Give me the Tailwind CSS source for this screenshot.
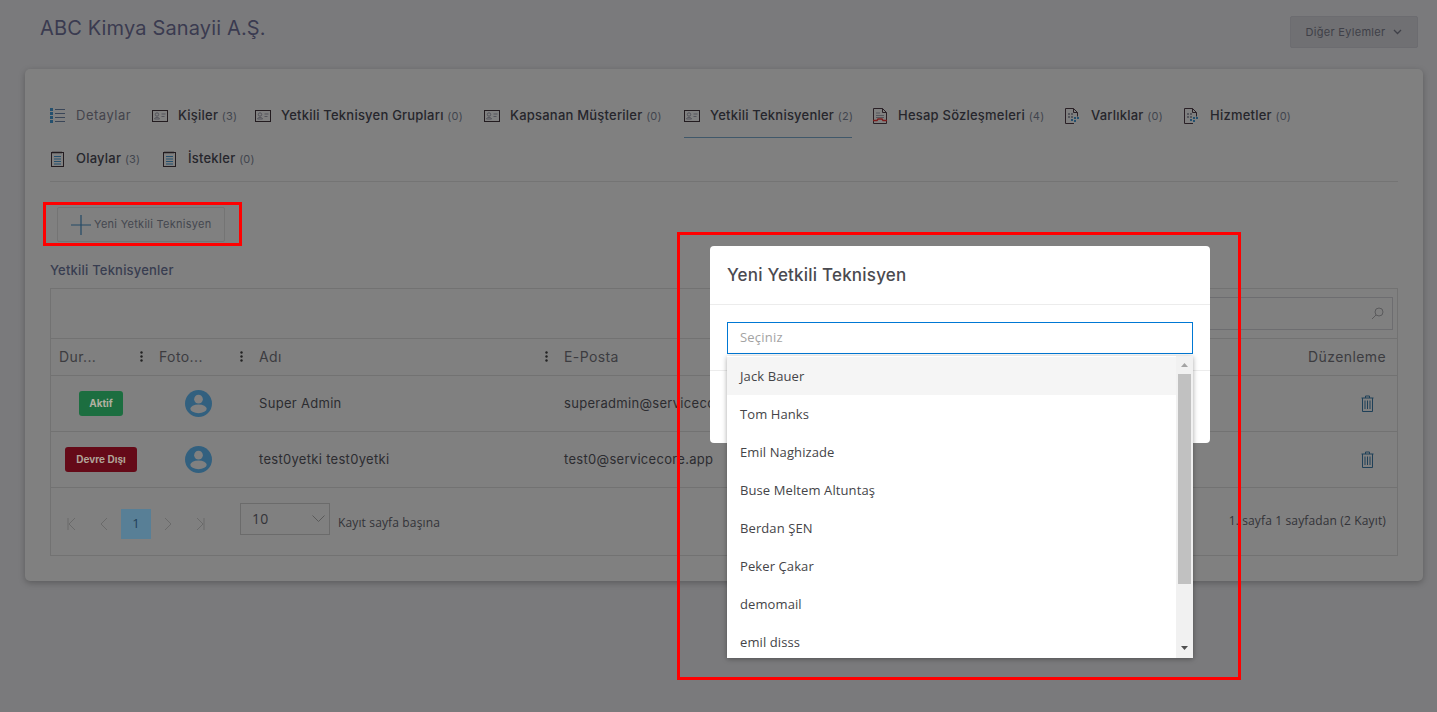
<!DOCTYPE html>
<html lang="tr">
<head>
<meta charset="utf-8">
<title>ABC Kimya Sanayii A.Ş.</title>
<script src="https://cdn.jsdelivr.net/npm/@tailwindcss/browser@4"></script>
</head>
<body class="m-0">
<div class="relative w-[1437px] h-[712px] overflow-hidden bg-[#7a7a7c] font-['Inter',sans-serif] text-[#26262c]">

  <!-- Page header -->
  <header class="flex justify-between items-start h-[69px] pl-[40px] pr-[19px]">
    <h1 class="mt-[14px] text-[20px] leading-[28px] font-normal tracking-[0.15px] text-[#3a3b50]">ABC Kimya Sanayii A.Ş.</h1>
    <button class="mt-[16px] flex items-center justify-center gap-[8px] w-[128px] h-[32px] rounded-[2px] bg-[#707073] border border-[#6c6c70] text-[11px] tracking-[0.3px] text-[#3f4048]">
      Diğer Eylemler
      <svg width="9" height="6" viewBox="0 0 9 6" fill="none" stroke="#3f4048" stroke-width="1.3"><path d="M1 1l3.5 3.5L8 1"/></svg>
    </button>
  </header>

  <!-- Card -->
  <main class="ml-[25px] w-[1398px] h-[512px] pt-[24px] pl-[25px] pr-[25px] rounded-[5px] bg-[#808080] shadow-[0_2px_6px_rgba(0,0,0,0.25)]">
    <!-- Tabs -->
    <nav class="flex flex-wrap pt-[1px] border-b border-[#747474] text-[13px] font-medium tracking-[0.22px]">
      <a class="flex items-center h-[43px] w-[102px] gap-[11px] text-[#44444c] font-normal tracking-[0.5px]">
        <svg class="shrink-0" width="15" height="15" viewBox="0 0 15 15" fill="none"><g fill="#24506e"><rect x="0" y="0" width="3" height="3"/><rect x="0" y="4" width="3" height="3"/><rect x="0" y="8" width="3" height="3"/><rect x="0" y="12" width="3" height="3"/></g><path d="M5 1.500h10M5 5.500h10M5 9.500h10M5 13.500h10" stroke="#3a4658"/></svg>
        Detaylar
      </a>
      <a class="flex items-center h-[43px] w-[103px] gap-[10px]">
        <svg class="shrink-0" width="16" height="12" viewBox="0 0 16 12" fill="none"><rect x=".5" y=".5" width="15" height="11" stroke="#231c20"/><circle cx="5" cy="4.500" r="1.700" stroke="#55555c"/><path d="M2.500 9c0-2 5-2 5 0zM9.500 4h4M9.500 6.500h3" stroke="#55555c"/></svg>
        <span class="whitespace-nowrap">Kişiler <span class="font-normal text-[11px] text-[#41454e]">(3)</span></span>
      </a>
      <a class="flex items-center h-[43px] w-[229px] gap-[10px]">
        <svg class="shrink-0" width="16" height="12" viewBox="0 0 16 12" fill="none"><rect x=".5" y=".5" width="15" height="11" stroke="#231c20"/><circle cx="5" cy="4.500" r="1.700" stroke="#55555c"/><path d="M2.500 9c0-2 5-2 5 0zM9.500 4h4M9.500 6.500h3" stroke="#55555c"/></svg>
        <span class="whitespace-nowrap">Yetkili Teknisyen Grupları <span class="font-normal text-[11px] text-[#41454e]">(0)</span></span>
      </a>
      <a class="flex items-center h-[43px] w-[200px] gap-[10px]">
        <svg class="shrink-0" width="16" height="12" viewBox="0 0 16 12" fill="none"><rect x=".5" y=".5" width="15" height="11" stroke="#231c20"/><circle cx="5" cy="4.500" r="1.700" stroke="#55555c"/><path d="M2.500 9c0-2 5-2 5 0zM9.500 4h4M9.500 6.500h3" stroke="#55555c"/></svg>
        <span class="whitespace-nowrap">Kapsanan Müşteriler <span class="font-normal text-[11px] text-[#41454e]">(0)</span></span>
      </a>
      <div class="w-[189px] h-[43px]">
        <a class="flex items-center h-[44px] w-[168px] gap-[10px] border-b border-[#40586a]">
          <svg class="shrink-0" width="16" height="12" viewBox="0 0 16 12" fill="none"><rect x=".5" y=".5" width="15" height="11" stroke="#231c20"/><circle cx="5" cy="4.500" r="1.700" stroke="#55555c"/><path d="M2.500 9c0-2 5-2 5 0zM9.500 4h4M9.500 6.500h3" stroke="#55555c"/></svg>
          <span class="whitespace-nowrap">Yetkili Teknisyenler <span class="font-normal text-[11px] text-[#41454e]">(2)</span></span>
        </a>
      </div>
      <a class="flex items-center h-[43px] w-[192px] gap-[11px]">
        <svg class="shrink-0" width="14" height="16" viewBox="0 0 14 16" fill="none"><path d="M.5.500h9l4 4v11H.5zM9.500.500v4h4" stroke="#2a2026"/><path d="M3 5h4M3 7.500h8M3 9.500h8" stroke="#55565c"/><path d="M0 12.500h4l1-1.500h4l1 1.500h4" stroke="#7c1c1c" stroke-width="1.400"/></svg>
        <span class="whitespace-nowrap">Hesap Sözleşmeleri <span class="font-normal text-[11px] text-[#41454e]">(4)</span></span>
      </a>
      <a class="flex items-center h-[43px] w-[119px] gap-[11px]">
        <svg class="shrink-0" width="15" height="16" viewBox="0 0 15 16" fill="none"><path d="M9 15.500H.5V.5h8l4 4v4M8.500.5v4h4" stroke="#2a2026"/><g fill="#55565c"><rect x="3" y="5" width="2" height="2"/><rect x="6" y="5" width="2" height="2"/><rect x="3" y="8" width="2" height="2"/><rect x="6" y="8" width="2" height="2"/></g><g fill="#24506e"><rect x="6" y="11" width="2" height="2"/><rect x="9" y="9" width="2" height="2"/><rect x="12" y="9" width="2" height="2"/><rect x="9" y="12" width="2" height="2"/></g></svg>
        <span class="whitespace-nowrap">Varlıklar <span class="font-normal text-[11px] text-[#41454e]">(0)</span></span>
      </a>
      <a class="flex items-center h-[43px] w-[120px] gap-[11px]">
        <svg class="shrink-0" width="15" height="16" viewBox="0 0 15 16" fill="none"><path d="M9 15.500H.5V.5h8l4 4v4M8.500.5v4h4" stroke="#2a2026"/><g fill="#55565c"><rect x="3" y="5" width="2" height="2"/><rect x="6" y="5" width="2" height="2"/><rect x="3" y="8" width="2" height="2"/><rect x="6" y="8" width="2" height="2"/></g><g fill="#24506e"><rect x="6" y="11" width="2" height="2"/><rect x="9" y="9" width="2" height="2"/><rect x="12" y="9" width="2" height="2"/><rect x="9" y="12" width="2" height="2"/></g></svg>
        <span class="whitespace-nowrap">Hizmetler <span class="font-normal text-[11px] text-[#41454e]">(0)</span></span>
      </a>
      <a class="flex items-center h-[44px] w-[112px] gap-[12px]">
        <svg class="shrink-0 ml-[1px]" width="13" height="16" viewBox="0 0 13 16" fill="none"><rect x=".5" y="1.500" width="12" height="14" stroke="#231c20"/><path d="M2 .5v2M4 .5v2M6 .5v2M8 .5v2M10 .5v2" stroke="#231c20"/><path d="M3 5.500h7M3 8h7M3 10.500h7M3 13h7" stroke="#24506e" stroke-width="1.200"/></svg>
        <span class="whitespace-nowrap">Olaylar <span class="font-normal text-[11px] text-[#41454e]">(3)</span></span>
      </a>
      <a class="flex items-center h-[44px] w-[150px] gap-[12px]">
        <svg class="shrink-0 ml-[1px]" width="13" height="16" viewBox="0 0 13 16" fill="none"><rect x=".5" y="1.500" width="12" height="14" stroke="#231c20"/><path d="M2 .5v2M4 .5v2M6 .5v2M8 .5v2M10 .5v2" stroke="#231c20"/><path d="M3 5.500h7M3 8h7M3 10.500h7M3 13h7" stroke="#24506e" stroke-width="1.200"/></svg>
        <span class="whitespace-nowrap">İstekler <span class="font-normal text-[11px] text-[#41454e]">(0)</span></span>
      </a>
    </nav>

    <!-- Add button -->
    <button class="mt-[25px] ml-[7px] flex items-center gap-[3px] w-[168px] h-[35px] pl-[13px] rounded-[2px] border border-[#747474] text-[11px] tracking-[0.27px] text-[#44474f]">
      <svg class="shrink-0" width="20" height="20" viewBox="0 0 20 20" fill="none" stroke="#244a66" stroke-width="1.200"><path d="M10 0v20M0 10h20"/></svg>
      Yeni Yetkili Teknisyen
    </button>

    <h2 class="mt-[18px] mb-[8px] h-[20px] text-[13px] leading-[20px] font-medium tracking-[0.2px] text-[#383d50]">Yetkili Teknisyenler</h2>

    <!-- Grid -->
    <section class="w-[1348px] h-[268px] border border-[#727272] text-[13px] tracking-[0.3px]">
      <div class="flex justify-end items-center h-[50px] pr-[4px] border-b border-[#727272]">
        <div class="flex items-center justify-end w-[400px] h-[33px] pr-[8px] border border-[#6d6d70]">
          <svg width="13" height="13" viewBox="0 0 13 13" fill="none" stroke="#5a5a5c"><circle cx="8" cy="5" r="4"/><path d="M5 8l-4 4"/></svg>
        </div>
      </div>
      <div class="grid grid-cols-[100px_100px_305px_1fr_120px] h-[37px] items-center border-b border-[#727272] text-[14px] tracking-[0.4px] text-[#3c3c40]">
        <div class="flex justify-between items-center pl-[8px] pr-[8px] pb-[2px]"><span>Dur...</span><svg width="3" height="11" viewBox="0 0 3 11" fill="#222"><circle cx="1.500" cy="1.500" r="1.200"/><circle cx="1.500" cy="5.500" r="1.200"/><circle cx="1.500" cy="9.500" r="1.200"/></svg></div>
        <div class="flex justify-between items-center pl-[8px] pr-[8px] pb-[2px]"><span>Foto...</span><svg width="3" height="11" viewBox="0 0 3 11" fill="#222"><circle cx="1.500" cy="1.500" r="1.200"/><circle cx="1.500" cy="5.500" r="1.200"/><circle cx="1.500" cy="9.500" r="1.200"/></svg></div>
        <div class="flex justify-between items-center pl-[8px] pr-[8px] pb-[2px]"><span>Adı</span><svg width="3" height="11" viewBox="0 0 3 11" fill="#222"><circle cx="1.500" cy="1.500" r="1.200"/><circle cx="1.500" cy="5.500" r="1.200"/><circle cx="1.500" cy="9.500" r="1.200"/></svg></div>
        <div class="pl-[8px] pb-[2px]">E-Posta</div>
        <div class="text-right pr-[11px] pb-[2px]">Düzenleme</div>
      </div>
      <div class="grid grid-cols-[100px_100px_305px_1fr_120px] h-[56px] items-center border-b border-[#727272] text-[#2c2c30]">
        <div class="flex justify-center"><span class="flex items-center justify-center w-[44px] h-[25px] rounded-[3px] bg-[#1c6e40] text-[10px] font-bold tracking-normal text-[#b0b0a0]">Aktif</span></div>
        <div class="flex justify-center pr-[5px]"><svg width="27" height="27" viewBox="0 0 28 28"><circle cx="14" cy="14" r="14" fill="#32607f"/><circle cx="14" cy="9.500" r="4.500" fill="#808080"/><ellipse cx="14" cy="19.500" rx="8.500" ry="4.500" fill="#808080"/></svg></div>
        <div class="pl-[8px]">Super Admin</div>
        <div class="pl-[8px] whitespace-nowrap">superadmin@servicecore.app</div>
        <div class="flex justify-end pr-[23px]"><svg width="13" height="17" viewBox="0 0 13 17" fill="none" stroke="#1f4058"><path d="M.5 3h12M4.500 3V1h4v2M1.500 3v13.500h10V3M4 5.500v8.500M6.500 5.500v8.500M9 5.500v8.500"/></svg></div>
      </div>
      <div class="grid grid-cols-[100px_100px_305px_1fr_120px] h-[56px] items-center border-b border-[#727272] text-[#2c2c30]">
        <div class="flex justify-center"><span class="flex items-center justify-center w-[72px] h-[25px] rounded-[3px] bg-[#650a18] text-[10px] font-bold tracking-normal text-[#b0a498]">Devre Dışı</span></div>
        <div class="flex justify-center pr-[5px]"><svg width="27" height="27" viewBox="0 0 28 28"><circle cx="14" cy="14" r="14" fill="#32607f"/><circle cx="14" cy="9.500" r="4.500" fill="#808080"/><ellipse cx="14" cy="19.500" rx="8.500" ry="4.500" fill="#808080"/></svg></div>
        <div class="pl-[8px]">test0yetki test0yetki</div>
        <div class="pl-[8px] whitespace-nowrap">test0@servicecore.app</div>
        <div class="flex justify-end pr-[23px]"><svg width="13" height="17" viewBox="0 0 13 17" fill="none" stroke="#1f4058"><path d="M.5 3h12M4.500 3V1h4v2M1.500 3v13.500h10V3M4 5.500v8.500M6.500 5.500v8.500M9 5.500v8.500"/></svg></div>
      </div>
      <!-- Pager -->
      <div class="flex items-start justify-between pl-[6px] pr-[11px] font-['Open_Sans',sans-serif] text-[12px] tracking-[0.14px] text-[#333338]">
        <div class="flex items-start">
          <div class="flex gap-[2px] mt-[21px]">
            <span class="flex items-center justify-center w-[30px] h-[30px]"><svg width="10" height="12" viewBox="0 0 10 12" fill="none" stroke="#6a6a6a"><path d="M1 0v12M8 0L2 6l6 6"/></svg></span>
            <span class="flex items-center justify-center w-[30px] h-[30px]"><svg width="8" height="12" viewBox="0 0 8 12" fill="none" stroke="#6a6a6a"><path d="M7 0L1 6l6 6"/></svg></span>
            <span class="flex items-center justify-center w-[30px] h-[30px] bg-[#587f96] text-[#1f4058] text-[13px]">1</span>
            <span class="flex items-center justify-center w-[30px] h-[30px]"><svg width="8" height="12" viewBox="0 0 8 12" fill="none" stroke="#6a6a6a"><path d="M1 0l6 6-6 6"/></svg></span>
            <span class="flex items-center justify-center w-[30px] h-[30px]"><svg width="10" height="12" viewBox="0 0 10 12" fill="none" stroke="#6a6a6a"><path d="M9 0v12M2 0l6 6-6 6"/></svg></span>
          </div>
          <div class="flex items-center justify-between mt-[15px] ml-[25px] w-[90px] h-[32px] pl-[11px] pr-[4px] pb-[2px] border border-[#6b6b6b] text-[14px]">
            10
            <svg width="13" height="7" viewBox="0 0 13 7" fill="none" stroke="#5a5a5a"><path d="M.5.500l6 6 6-6"/></svg>
          </div>
          <span class="mt-[26px] ml-[8px] leading-[18px]">Kayıt sayfa başına</span>
        </div>
        <span class="mt-[24px] leading-[18px]">1. sayfa 1 sayfadan (2 Kayıt)</span>
      </div>
    </section>
  </main>

  <!-- Modal -->
  <div class="absolute left-[710px] top-[246px] w-[500px] h-[197px] rounded-[4px] bg-white">
    <div class="flex items-center h-[59px] px-[17px] pt-[2px] border-b border-[#ececec] text-[17px] font-medium tracking-[0.2px] text-[#4a4a50]">Yeni Yetkili Teknisyen</div>
    <div class="h-[66px] px-[17px] pt-[17px] border-b border-[#ececec]">
      <div class="flex items-center h-[32px] pl-[12px] border border-[#0078d4] font-['Open_Sans',sans-serif] text-[13px] tracking-[0.2px] text-[#a3a3a3]">Seçiniz</div>
    </div>
  </div>

  <!-- Dropdown -->
  <div class="absolute left-[727px] top-[356px] flex w-[466px] h-[302px] bg-white shadow-[0_1px_5px_rgba(0,0,0,0.35)] overflow-hidden font-['Open_Sans',sans-serif] text-[13px] tracking-[0.1px] text-[#444448]">
    <ul class="flex-1 pt-[1px]">
      <li class="flex items-center h-[38px] pl-[13px] pt-[2px] bg-[#f5f5f5]">Jack Bauer</li>
      <li class="flex items-center h-[38px] pl-[13px] pt-[2px]">Tom Hanks</li>
      <li class="flex items-center h-[38px] pl-[13px] pt-[2px]">Emil Naghizade</li>
      <li class="flex items-center h-[38px] pl-[13px] pt-[2px]">Buse Meltem Altuntaş</li>
      <li class="flex items-center h-[38px] pl-[13px] pt-[2px]">Berdan ŞEN</li>
      <li class="flex items-center h-[38px] pl-[13px] pt-[2px]">Peker Çakar</li>
      <li class="flex items-center h-[38px] pl-[13px] pt-[2px]">demomail</li>
      <li class="flex items-center h-[38px] pl-[13px] pt-[2px]">emil disss</li>
    </ul>
    <div class="relative w-[17px] h-full bg-[#f1f1f1]">
      <div class="flex justify-center pt-[7px]"><svg width="7" height="4" viewBox="0 0 7 4" fill="#a3a3a3"><path d="M3.500 0L7 4H0z"/></svg></div>
      <div class="mx-auto mt-[7px] w-[13px] h-[210px] bg-[#c1c1c1]"></div>
      <div class="flex justify-center mt-[62px]"><svg width="7" height="4" viewBox="0 0 7 4" fill="#505050"><path d="M0 0h7L3.500 4z"/></svg></div>
    </div>
  </div>

  <!-- Annotations -->
  <div class="absolute left-[43px] top-[202px] w-[199px] h-[44px] border-[3px] border-[#ff0000]"></div>
  <div class="absolute left-[677px] top-[232px] w-[564px] h-[448px] border-[3px] border-[#ff0000]"></div>
</div>
</body>
</html>
